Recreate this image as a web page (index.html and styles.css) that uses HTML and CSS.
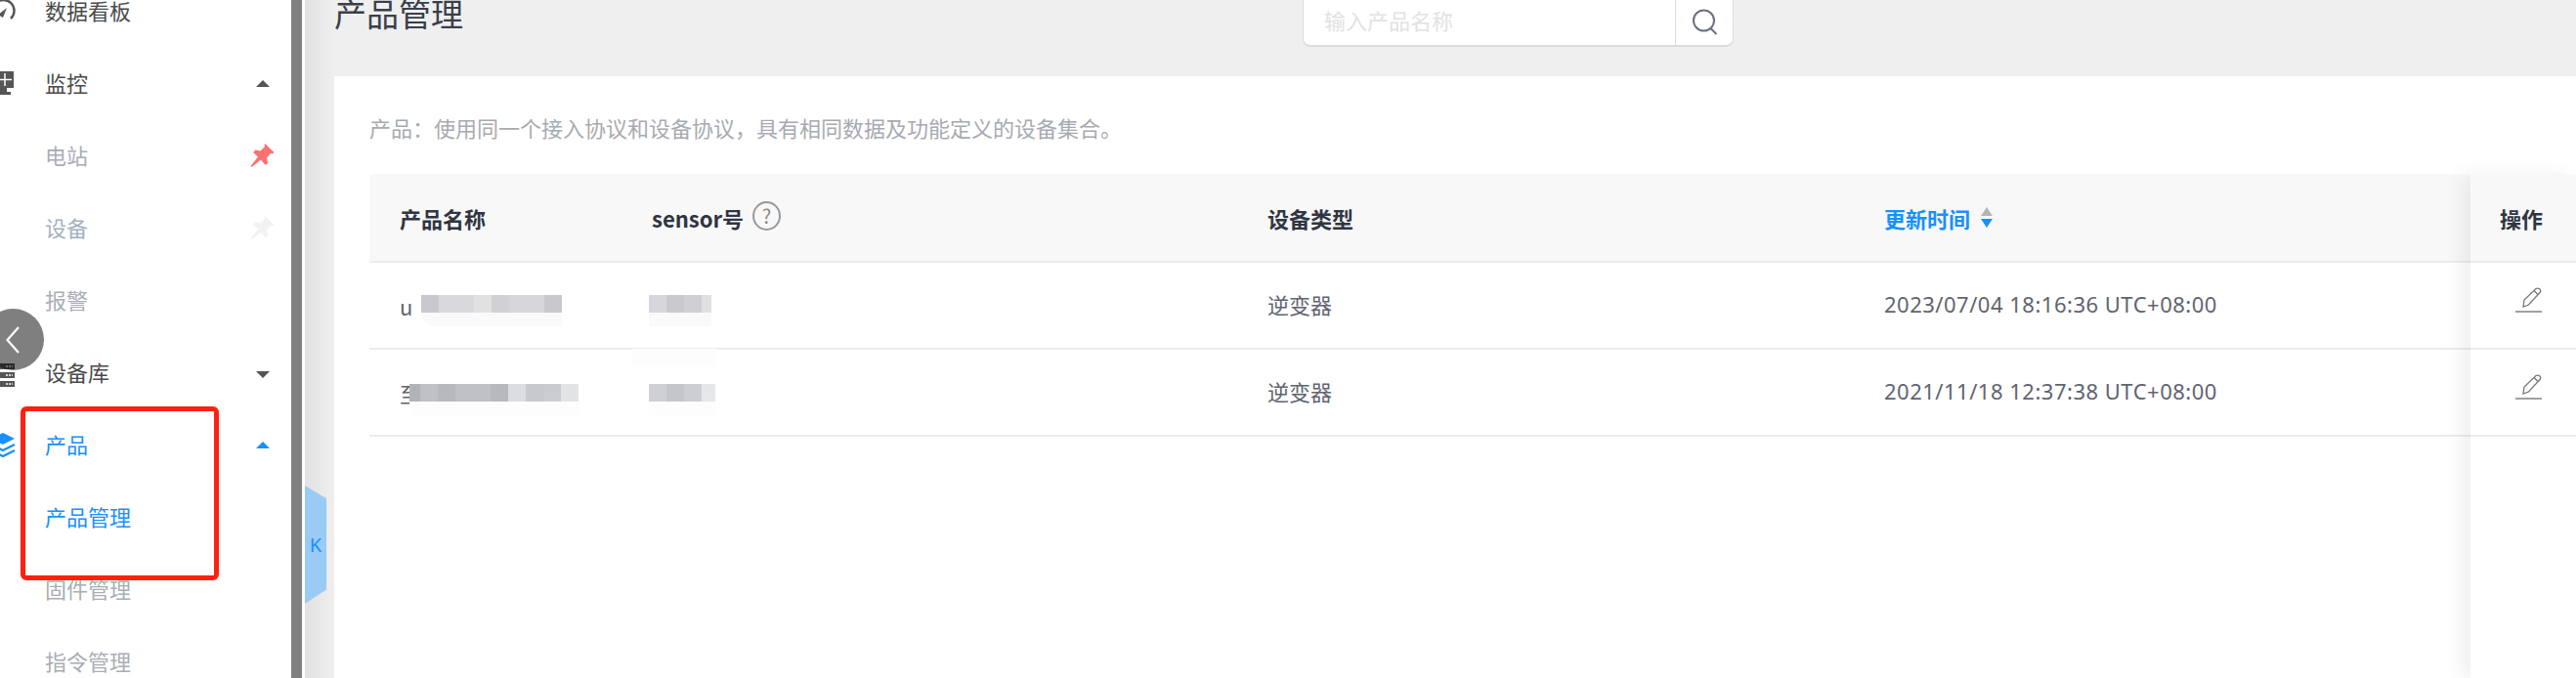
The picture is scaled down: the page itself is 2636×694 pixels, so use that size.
FILE: index.html
```html
<!DOCTYPE html>
<html lang="zh-CN">
<head>
    <meta charset="UTF-8">
    <title>产品管理</title>
    <link rel="stylesheet" href="styles.css">
</head>
<body>
    <div class="layout">
        <aside class="sidebar">
            <ul class="menu">
                <li class="menu-item menu-top">
                    <svg class="menu-icon" viewBox="0 0 26 26"><path d="M6 21a11 11 0 1 1 15 0" fill="none" stroke="#555" stroke-width="2.4"/><path d="M8 17l9-7-4 10z" fill="#555"/></svg>
                    <span>数据看板</span>
                </li>
                <li class="menu-item">
                    <svg class="menu-icon" viewBox="0 0 26 26"><path d="M2 1h22v17H2zM10 18v4H6v3h15v-3h-4v-4z" fill="#555"/><path d="M8 3v13M15 3v13M4 9.500h18" stroke="#fff" stroke-width="1.500"/></svg>
                    <span>监控</span>
                    <i class="caret caret-up"></i>
                </li>
                <li class="menu-item sub">
                    <span>电站</span>
                    <svg class="pin" viewBox="0 0 26 26"><path d="M15.500 1L25 10l-2 1.500-1.500-.5-4 4.500 1 5.500-2.500 2-4.500-5.500L2 25l-1-1 7.500-9.500-5-4.500L6 7.500l5 1L15.500 4 15 2.500z" fill="#ff7070"/></svg>
                </li>
                <li class="menu-item sub">
                    <span class="sub-blue">设备</span>
                    <svg class="pin" viewBox="0 0 26 26"><path d="M15.500 1L25 10l-2 1.500-1.500-.5-4 4.500 1 5.500-2.500 2-4.500-5.500L2 25l-1-1 7.500-9.500-5-4.500L6 7.500l5 1L15.500 4 15 2.500z" fill="#f2f2f2"/></svg>
                </li>
                <li class="menu-item sub"><span>报警</span></li>
                <li class="menu-item">
                    <svg class="menu-icon icon-server" viewBox="0 0 26 26"><path d="M1 1h24v6H1zM1 10h24v6H1zM1 19h24v6H1z" fill="#555"/><path d="M16 4h7M16 13h7M16 22h7" stroke="#fff" stroke-width="1.300" stroke-dasharray="2 1"/></svg>
                    <span>设备库</span>
                    <i class="caret caret-down"></i>
                </li>
                <li class="menu-item active">
                    <svg class="menu-icon" viewBox="0 0 26 26"><path d="M13 1l12 6-12 6L1 7z" fill="#1890ff"/><path d="M1 13l12 6 12-6M1 19l12 6 12-6" fill="none" stroke="#1890ff" stroke-width="2.400"/></svg>
                    <span>产品</span>
                    <i class="caret caret-up"></i>
                </li>
                <li class="menu-item sub active"><span>产品管理</span></li>
                <li class="menu-item sub"><span>固件管理</span></li>
                <li class="menu-item sub"><span>指令管理</span></li>
            </ul>
            <div class="back-btn">
                <svg viewBox="0 0 14 28"><path d="M13 1L1.500 14 13 27" fill="none" stroke="#fff" stroke-width="2.200"/></svg>
            </div>
            <div class="highlight-box"></div>
        </aside>
        <div class="divider"></div>

        <main class="content">
            <div class="collapse-tab"><span>K</span></div>
            <header class="page-header">
                <h1>产品管理</h1>
                <div class="search">
                    <div class="search-input">输入产品名称</div>
                    <div class="search-btn">
                        <svg viewBox="0 0 27 27"><circle cx="12.500" cy="12" r="10.500" fill="none" stroke="#6b7080" stroke-width="2"/><path d="M19.500 20l6 6" stroke="#6b7080" stroke-width="2"/></svg>
                    </div>
                </div>
            </header>

            <section class="panel">
                <p class="desc">产品：使用同一个接入协议和设备协议，具有相同数据及功能定义的设备集合。</p>
                <div class="table">
                    <div class="row head">
                        <div class="col col-name">产品名称</div>
                        <div class="col col-sensor">sensor号<span class="help">?</span></div>
                        <div class="col col-type">设备类型</div>
                        <div class="col col-time sorted">更新时间<span class="sort"><i class="sort-up"></i><i class="sort-down"></i></span></div>
                    </div>
                    <div class="row">
                        <div class="col col-name">u<span class="mosaic mosaic-name-a"></span></div>
                        <div class="col col-sensor"><span class="mosaic mosaic-sensor-a"></span></div>
                        <div class="col col-type">逆变器</div>
                        <div class="col col-time">2023/07/04 18:16:36 UTC+08:00</div>
                    </div>
                    <div class="row">
                        <div class="col col-name">至<span class="mosaic mosaic-name-b"></span></div>
                        <div class="col col-sensor"><span class="mosaic mosaic-sensor-b"></span></div>
                        <div class="col col-type">逆变器</div>
                        <div class="col col-time">2021/11/18 12:37:38 UTC+08:00</div>
                    </div>
                </div>

                <!-- fixed column, sits over the table -->
                <div class="op-column">
                    <div class="op-cell op-head">操作</div>
                    <div class="op-cell">
                        <svg class="edit" viewBox="0 0 27 26"><path d="M8 20l1-7L21 1.500q2-1 4 .5 1.500 2 0 3.500L13.500 18zM19 3.500l4.500 4.500" fill="none" stroke="#777" stroke-width="1.300"/><path d="M0 25h27" stroke="#777" stroke-width="1.400"/></svg>
                    </div>
                    <div class="op-cell">
                        <svg class="edit" viewBox="0 0 27 26"><path d="M8 20l1-7L21 1.500q2-1 4 .5 1.500 2 0 3.500L13.500 18zM19 3.500l4.500 4.500" fill="none" stroke="#777" stroke-width="1.300"/><path d="M0 25h27" stroke="#777" stroke-width="1.400"/></svg>
                    </div>
                </div>
            </section>
        </main>
    </div>
</body>
</html>
```

FILE: styles.css
```css
:root {
    --blue: #1890ff;
    --dark: #2f3542;
    --grey: #5f6470;
    --line: #ececec;
}

html, body {
    margin: 0;
    padding: 0;
    height: 694px;
    overflow: hidden;
    font-family: "Noto Sans CJK SC", "Noto Sans", sans-serif;
    background: #efefef;
}

.layout {
    display: flex;
    height: 694px;
    overflow: hidden;
}

/* left menu */
.sidebar {
    position: relative;
    width: 298px;
    flex: none;
    background: #fff;
}

.menu {
    list-style: none;
    margin: -24px 0 0;
    padding: 0;
}

.menu-item {
    box-sizing: border-box;
    display: flex;
    align-items: center;
    height: 74px;
    padding: 0 0 6px 46px;
    font-size: 22px;
    color: #4a4a4a;
    position: relative;
}

.menu-item.sub {
    color: #a9adb5;
}

.menu-item .sub-blue {
    color: #a3b0c0;
}

.menu-item.active {
    color: var(--blue);
}

.menu-icon {
    position: absolute;
    left: -10px;
    top: 22px;
    width: 26px;
    height: 26px;
}

.icon-server {
    top: 25px;
}

.caret {
    position: absolute;
    left: 262px;
    top: 32px;
    border-left: 7px solid transparent;
    border-right: 7px solid transparent;
}

.caret-up {
    border-bottom: 7px solid #555;
}

.caret-down {
    top: 34px;
    border-top: 7px solid #555;
}

.active .caret-up {
    border-bottom-color: var(--blue);
}

.pin {
    position: absolute;
    left: 255px;
    top: 22px;
    width: 27px;
    height: 26px;
}

.back-btn {
    position: absolute;
    left: -18px;
    top: 316px;
    width: 63px;
    height: 63px;
    border-radius: 50%;
    background: rgba(0, 0, 0, 0.5);
}

.back-btn svg {
    position: absolute;
    left: 24px;
    top: 18px;
    width: 14px;
    height: 28px;
}

.highlight-box {
    position: absolute;
    left: 21px;
    top: 416px;
    width: 203px;
    height: 178px;
    box-sizing: border-box;
    border: 5px solid #ff2010;
    border-radius: 6px;
}

.divider {
    width: 11px;
    flex: none;
    background: #808080;
    border-right: 3px solid #fff;
}

/* content */
.content {
    position: relative;
    flex: 1;
    min-width: 0;
    padding-left: 30px;
    background: linear-gradient(to right, #e2e2e2, #efefef 30px);
}

.collapse-tab {
    position: absolute;
    left: 0;
    top: 497px;
    width: 22px;
    height: 121px;
    background: #9acbf4;
    clip-path: polygon(0 0, 100% 11%, 100% 88%, 0 100%);
    color: var(--blue);
    font-family: "Noto Sans", sans-serif;
    font-size: 20px;
    display: flex;
    align-items: center;
    justify-content: center;
}

.page-header {
    position: relative;
    height: 78px;
}

.page-header h1 {
    margin: 0;
    position: absolute;
    left: 0;
    top: -11px;
    font-size: 33px;
    line-height: 48px;
    font-weight: 400;
    color: #3a3f4b;
}

.search {
    position: absolute;
    left: 991px;
    top: -2px;
    width: 441px;
    height: 50px;
    display: flex;
    box-sizing: border-box;
    background: #fff;
    border: 1px solid #dcdcdc;
    border-bottom-width: 2px;
    border-radius: 0 0 8px 8px;
}

.search-input {
    flex: 1;
    padding-left: 21px;
    font-size: 22px;
    line-height: 42px;
    color: #e2e2e2;
}

.search-btn {
    width: 58px;
    border-left: 1px solid #dcdcdc;
    display: flex;
    align-items: center;
    justify-content: center;
}

.search-btn svg {
    width: 27px;
    height: 27px;
}

.panel {
    position: relative;
    background: #fff;
    height: 616px;
    padding-left: 36px;
    overflow: hidden;
}

.desc {
    box-sizing: border-box;
    margin: 0;
    padding-top: 30px;
    height: 100px;
    font-size: 22px;
    line-height: 44px;
    color: #a7aab1;
}

.row {
    display: flex;
    align-items: center;
    height: 87px;
    padding-left: 31px;
    border-bottom: 2px solid var(--line);
    font-size: 22px;
    color: var(--grey);
}

.row.head {
    height: 89px;
    background: #f8f8f8;
    color: var(--dark);
    font-weight: 700;
}

.row:not(.head) .col-type,
.row:not(.head) .col-time {
    margin-bottom: 4px;
}

.col {
    box-sizing: border-box;
    display: flex;
    align-items: center;
    flex: none;
}

.col-name {
    width: 258px;
}

.col-sensor {
    width: 630px;
}

.col-type {
    width: 631px;
}

.col-time {
    width: 600px;
    font-family: "Noto Sans", "Noto Sans CJK SC", sans-serif;
    letter-spacing: 0.5px;
}

.row.head .col-time {
    font-family: "Noto Sans CJK SC", sans-serif;
    letter-spacing: 0;
}

.sorted {
    color: var(--blue);
}

.help {
    width: 29px;
    height: 30px;
    margin: -4px 0 0 9px;
    box-sizing: border-box;
    border: 2px solid #999;
    border-radius: 50%;
    font-size: 20px;
    line-height: 25px;
    font-weight: 400;
    text-align: center;
    color: #888;
}

.sort {
    display: inline-flex;
    flex-direction: column;
    gap: 3px;
    margin-left: 11px;
}

.sort-up {
    border-left: 6px solid transparent;
    border-right: 6px solid transparent;
    border-bottom: 9px solid #b5b5b5;
}

.sort-down {
    border-left: 6px solid transparent;
    border-right: 6px solid transparent;
    border-top: 9px solid var(--blue);
}

/* fixed right column */
.op-column {
    position: absolute;
    left: 2186px;
    right: 0;
    top: 100px;
    bottom: 0;
    background: #fff;
    box-shadow: -10px 0 18px rgba(0, 0, 0, 0.06);
}

.op-cell {
    box-sizing: border-box;
    height: 89px;
    padding-left: 46px;
    border-bottom: 2px solid var(--line);
    display: flex;
    align-items: center;
}

.op-head {
    height: 91px;
    padding-left: 30px;
    background: #f8f8f8;
    font-size: 22px;
    font-weight: 700;
    color: var(--dark);
}

.edit {
    width: 27px;
    height: 26px;
    margin-bottom: 12px;
}

/* blurred out names */
.mosaic {
    position: relative;
    height: 18px;
}

.mosaic::after {
    content: "";
    position: absolute;
    left: 0;
    right: 0;
    top: 18px;
    height: 14px;
    background: #fafafa;
}

.mosaic-name-a {
    width: 144px;
    margin: -3px 0 0 9px;
    background: linear-gradient(to right,
        #c8c9cd 0 18px, #d8d9dc 18px 54px, #e0e1e3 54px 72px, #d0d1d5 72px 90px,
        #d6d7da 90px 126px, #c8c9cd 126px);
}

.mosaic-name-a::after {
    border-radius: 0 0 0 14px;
}

.mosaic-name-b {
    width: 173px;
    margin-left: -12px;
    background: linear-gradient(to right,
        #b2b3b7 0 11px, #c0c1c5 11px 29px, #b8b9bd 29px 47px, #c0c1c4 47px 83px,
        #b8b9be 83px 101px, #dcdde0 101px 119px, #c8c9ce 119px 137px,
        #cbccd0 137px 155px, #e2e3e5 155px);
}

.mosaic-name-b::after,
.mosaic-sensor-b::after {
    background: #fdfdfd;
}

.mosaic-sensor-a {
    width: 64px;
    margin: -3px 0 0 -3px;
    background: linear-gradient(to right,
        #d6d7da 0 18px, #c9cacd 18px 36px, #cfd0d3 36px 54px, #dfe0e2 54px);
}

.mosaic-sensor-b {
    width: 68px;
    margin-left: -3px;
    background: linear-gradient(to right,
        #cfd0d5 0 18px, #c5c6cb 18px 36px, #cdced2 36px 54px, #e6e7e9 54px);
}

/* the retouch also wiped the row line above */
.mosaic-sensor-b::before {
    content: "";
    position: absolute;
    left: -18px;
    width: 88px;
    top: -36px;
    height: 18px;
    background: #fdfdfd;
}
```
